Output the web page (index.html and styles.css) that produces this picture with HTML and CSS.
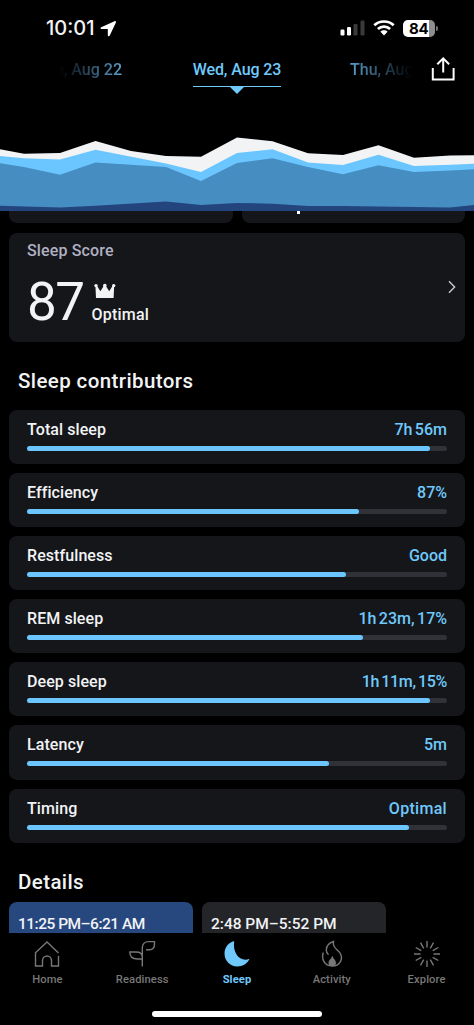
FILE: index.html
```html
<!DOCTYPE html>
<html lang="en">
<head>
    <meta charset="UTF-8">
    <meta name="viewport" content="width=device-width, initial-scale=1.0">
    <title>Sleep</title>
    <link rel="stylesheet" href="styles.css">
</head>
<body>
    <div class="screen">
        <header class="header">
            <div class="status-bar">
                <div class="status-left">
                    <span class="time">10:01</span>
                    <svg class="location" width="17" height="17" viewBox="0 0 17 17"><path d="M14.500 1.200 L1.200 7.200 C0 7.800 .4 9 1.600 9 H7.800 V15 C7.800 16.500 9.300 16.600 9.900 15.300 L15.900 2.500 C16.300 1.500 15.500 .7 14.500 1.200Z" fill="#fff"/></svg>
                </div>
                <div class="status-right">
                    <svg width="25" height="16" viewBox="0 0 25 16">
                        <rect x="0.5" y="9.5" width="4" height="6" rx="1.2" fill="#fff"/>
                        <rect x="7" y="7" width="4" height="8.500" rx="1.2" fill="#fff"/>
                        <rect x="13.500" y="4" width="4" height="11.500" rx="1.2" fill="#3a3a3b"/>
                        <rect x="20.500" y="0.500" width="4" height="15" rx="1.2" fill="#3a3a3b"/>
                    </svg>
                    <svg class="wifi" width="22" height="16" viewBox="0 0 22 16" fill="none" stroke="#fff" stroke-width="2.7">
                        <path d="M1.300 5.300 C6.600 .2 15.400 .2 20.700 5.300"/>
                        <path d="M4.900 9 C8.300 5.800 13.700 5.800 17.100 9"/>
                        <path d="M7.400 11.700 C9.400 9.900 12.600 9.900 14.600 11.700 L11 15.400Z" fill="#fff" stroke="none"/>
                    </svg>
                    <div class="battery"><span>84</span></div>
                </div>
            </div>
            <nav class="days">
                <span class="day day-prev">e, Aug 22</span>
                <span class="day day-current">Wed, Aug 23</span>
                <span class="day day-next">Thu, Aug</span>
                <svg class="share" width="24" height="25" viewBox="0 0 24 25" fill="none" stroke="#fff" stroke-width="2">
                    <path d="M1.800 12 V23.500 H22.600 V12 M12.200 16.500 V2.800 M6.300 8.200 L12.200 2.300 L18.100 8.200"/>
                </svg>
            </nav>
            <svg class="chart" width="474" height="76" viewBox="0 135 474 76">
                <path fill="#f2f3f5" d="M0 149.300 L24 153.700 L60 153 L95.500 141 L131 151 L166 156 L201 156.700 L237 137.500 L272.500 141.300 L308 153.300 L343 155 L378.500 145.300 L414 157.700 L450 155.500 L474 155.300 V211 H0Z"/>
                <path fill="#6bc6ff" d="M0 156 L24 158.300 L60 159.600 L95.500 149.700 L166 163.500 L201 172 L237 153 L272.500 149.300 L308 162.400 L343 165 L378.500 154.800 L414 166 L450 164.800 L474 163.700 V211 H0Z"/>
                <path fill="#468dc2" d="M0 163.300 L24 167 L60 174.800 L95.500 162.500 L166 167 L201 181 L237 163 L272.500 158.300 L308 167 L343 174.200 L378.500 165.300 L414 172 L450 170.500 L474 169.200 V211 H0Z"/>
                <path fill="#23447c" d="M0 205.700 L60 207.400 L95.500 205.800 L166 201.500 L201 205 L237 203 L272.500 203.700 L308 206 L343 206 L450 207.400 L474 205 V211 H0Z"/>
            </svg>
        </header>

        <main class="content">
            <div class="card-pair">
                <div class="card-stub"></div>
                <div class="card-stub has-text"></div>
            </div>

            <section class="score-card">
                <div>
                    <h2 class="score-label">Sleep Score</h2>
                    <div class="score-row">
                        <span class="score">87</span>
                        <div class="score-status">
                            <svg width="22" height="16" viewBox="0 0 22 16" fill="#f2f3f5">
                                <path d="M2 15 L1.400 2.500 L2.800 2.500 L6.400 8.300 L10 2.500 H11.600 L15.200 8.300 L18.800 2.500 L20.200 2.500 L19.600 15Z"/>
                                <circle cx="2" cy="2.600" r="1.700"/><circle cx="10.800" cy="2.600" r="1.800"/><circle cx="19.700" cy="2.600" r="1.700"/>
                            </svg>
                            <span>Optimal</span>
                        </div>
                    </div>
                </div>
                <svg width="8" height="14" viewBox="0 0 8 14" fill="none" stroke="#c4c5ca" stroke-width="1.500"><path d="M1 1.300 L6.600 7 L1 12.700"/></svg>
            </section>

            <h2 class="section-title">Sleep contributors</h2>
            <ul class="contributors">
                <li class="contributor">
                    <div class="row"><span>Total sleep</span><span class="value">7h 56m</span></div>
                    <div class="bar"><div class="fill" style="width: 96%"></div></div>
                </li>
                <li class="contributor">
                    <div class="row"><span>Efficiency</span><span class="value">87%</span></div>
                    <div class="bar"><div class="fill" style="width: 79%"></div></div>
                </li>
                <li class="contributor">
                    <div class="row"><span>Restfulness</span><span class="value">Good</span></div>
                    <div class="bar"><div class="fill" style="width: 76%"></div></div>
                </li>
                <li class="contributor">
                    <div class="row"><span>REM sleep</span><span class="value">1h 23m, 17%</span></div>
                    <div class="bar"><div class="fill" style="width: 80%"></div></div>
                </li>
                <li class="contributor">
                    <div class="row"><span>Deep sleep</span><span class="value tight">1h 11m, 15%</span></div>
                    <div class="bar"><div class="fill" style="width: 96%"></div></div>
                </li>
                <li class="contributor">
                    <div class="row"><span>Latency</span><span class="value">5m</span></div>
                    <div class="bar"><div class="fill" style="width: 72%"></div></div>
                </li>
                <li class="contributor">
                    <div class="row"><span>Timing</span><span class="value word">Optimal</span></div>
                    <div class="bar"><div class="fill" style="width: 91%"></div></div>
                </li>
            </ul>

            <h2 class="section-title">Details</h2>
            <div class="periods">
                <div class="period active">11:25 PM–6:21 AM</div>
                <div class="period">2:48 PM–5:52 PM</div>
            </div>
        </main>

        <footer class="tab-bar">
            <nav class="tabs">
                <a class="tab">
                    <svg width="28" height="28" viewBox="0 0 28 28"><path d="M25.500 13 L14 2 L2.500 12.800 V26 H9.500 V20.500 A4.500 4.500 0 0 1 18.500 20.500 V26 H25.500 V16"/></svg>
                    <span>Home</span>
                </a>
                <a class="tab">
                    <svg width="28" height="28" viewBox="0 0 28 28"><path d="M14.300 26.500 V8 C14.300 4 17 1.600 20.500 1.600 H26.500 V4 C26.500 8 24.300 9.700 21.500 9.700 H18 M14.300 19 H9.500 C4.500 19 1.800 17 1.800 12 H8 C11.500 12 14.300 13.500 14.300 17"/></svg>
                    <span>Readiness</span>
                </a>
                <a class="tab active">
                    <svg width="28" height="28" viewBox="0 0 28 28"><path class="solid" d="M11.200 1 C5.500 2.500 1.500 7.500 1.500 13.600 C1.500 21 7.200 26.500 14.200 26.500 C19.800 26.500 24.500 23.600 26.500 18.800 C18 22.500 9.300 14.500 11.200 1Z"/></svg>
                    <span>Sleep</span>
                </a>
                <a class="tab">
                    <svg width="28" height="28" viewBox="0 0 28 28">
                        <path d="M5.300 12.500 C3 19 6.500 26 14 26 C22 26 25.300 19 22.300 13.500 C20 9.500 14 8 15.500 1.500 C11 3 8.300 6 8.300 10 C8.300 12 9 13.500 10.500 14.800"/>
                        <path class="solid" d="M14.200 15.500 C14 18.500 10.500 20 10.500 23 C10.500 25 12 26.200 14.200 26.200 C16.500 26.200 18 25 18 23 C18 20 15 18.500 14.200 15.500Z"/>
                    </svg>
                    <span>Activity</span>
                </a>
                <a class="tab">
                    <svg width="28" height="28" viewBox="0 0 28 28"><path d="M14 1 V7.500 M14 20.500 V27 M1 14 H7.500 M20.500 14 H27 M7.500 2.700 L10.700 8.300 M17.300 19.700 L20.500 25.300 M2.700 7.500 L8.300 10.700 M19.700 17.300 L25.300 20.500 M2.700 20.500 L8.300 17.300 M19.700 10.700 L25.300 7.500 M7.500 25.300 L10.700 19.700 M17.300 8.300 L20.500 2.700"/></svg>
                    <span>Explore</span>
                </a>
            </nav>
            <div class="home-indicator"></div>
        </footer>
    </div>
</body>
</html>
```
FILE: styles.css
```css
:root {
    --accent: #6fc9fb;
    --card-bg: #15161a;
    --text-color: #f2f3f5;
    --muted: #777;
}

* {
    margin: 0;
    padding: 0;
    box-sizing: border-box;
}

body {
    background-color: #000;
    color: var(--text-color);
    font-family: Roboto, 'Liberation Sans', sans-serif;
    font-weight: 500;
}

svg {
    display: block;
    flex-shrink: 0;
}

.screen {
    width: 474px;
    height: 1025px;
    display: flex;
    flex-direction: column;
    overflow: hidden;
}

/* header */
.header {
    height: 211px;
    flex-shrink: 0;
    display: flex;
    flex-direction: column;
}

.status-bar {
    height: 56px;
    padding: 0 36px 0 46px;
    display: flex;
    justify-content: space-between;
    align-items: center;
    font-family: Inter, 'Liberation Sans', sans-serif;
    font-weight: 600;
}

.status-left,
.status-right {
    display: flex;
    align-items: center;
}

.time {
    font-size: 20px;
    font-weight: 500;
}

.location {
    margin-left: 5px;
}

.wifi {
    margin: 0 8px;
}

.battery {
    position: relative;
    width: 32px;
    height: 17px;
    margin-right: 3px;
    border-radius: 5px;
    background: linear-gradient(to right, #fff 26px, #8e8e8e 26px);
    color: #000;
    font-size: 15px;
    font-weight: 700;
    line-height: 17px;
    letter-spacing: -0.3px;
    padding-left: 6px;
}

.battery::after {
    content: '';
    position: absolute;
    right: -3px;
    top: 6px;
    width: 2px;
    height: 5px;
    border-radius: 0 2px 2px 0;
    background-color: #777;
}

.days {
    height: 44px;
    padding: 0 19px 0 54px;
    display: grid;
    grid-template-columns: 68px 230px 1fr 24px;
    align-items: start;
    font-size: 16px;
    line-height: 28px;
    white-space: nowrap;
}

.day {
    color: #5a9dca;
}

.day-prev {
    justify-self: end;
    -webkit-mask-image: linear-gradient(to right, transparent 4px, #000 66px);
    mask-image: linear-gradient(to right, transparent 4px, #000 66px);
}

.day-next {
    justify-self: start;
    margin-left: -2px;
    -webkit-mask-image: linear-gradient(to right, #000 0, transparent 62px);
    mask-image: linear-gradient(to right, #000 0, transparent 62px);
}

.day-current {
    position: relative;
    justify-self: center;
    height: 31px;
    letter-spacing: -0.1px;
    color: var(--accent);
    border-bottom: 1px solid var(--accent);
}

.day-current::after {
    content: '';
    position: absolute;
    left: 50%;
    top: 31px;
    margin-left: -7px;
    border: 7px solid transparent;
    border-top-color: var(--accent);
    border-bottom: 0;
}

.chart {
    margin-top: auto;
}

/* scrolling content */
.content {
    flex: 1;
    min-height: 0;
    overflow: hidden;
    padding: 0 9px;
}

.card-pair {
    display: grid;
    grid-template-columns: 1fr 1fr;
    gap: 9px;
}

.card-stub {
    position: relative;
    height: 12px;
    border-radius: 0 0 8px 8px;
    background-color: var(--card-bg);
}

.has-text::before {
    content: '';
    position: absolute;
    left: 55px;
    top: 0;
    width: 3px;
    height: 3px;
    background-color: #fff;
}

.score-card {
    height: 109px;
    margin-top: 10px;
    padding: 9px 9px 0 18px;
    border-radius: 8px;
    background-color: var(--card-bg);
    display: flex;
    justify-content: space-between;
}

.score-card > svg {
    margin-top: 38px;
}

.score-label {
    font-size: 16px;
    font-weight: 500;
    line-height: 18px;
    letter-spacing: 0.15px;
    color: #b0b0c2;
}

.score-row {
    display: flex;
    margin-top: 13px;
}

.score {
    font-size: 53px;
    font-weight: 400;
    line-height: 58px;
    letter-spacing: -1.5px;
}

.score-status {
    margin-left: 8px;
    padding-top: 10px;
    font-size: 16px;
    line-height: 18px;
    letter-spacing: 0.2px;
}

.score-status svg {
    margin: 0 0 7px 2px;
}

.section-title {
    margin: 26px 0 0 9px;
    font-size: 20.5px;
    font-weight: 500;
    line-height: 26px;
    letter-spacing: 0.4px;
}

.contributors {
    list-style: none;
    margin-top: 16px;
    display: grid;
    gap: 9px;
}

.contributor {
    height: 54.1px;
    padding: 10px 18px 0;
    border-radius: 8px;
    background-color: var(--card-bg);
}

.row {
    display: flex;
    justify-content: space-between;
    font-size: 16px;
    line-height: 19px;
    letter-spacing: 0.08px;
}

.value {
    color: var(--accent);
    letter-spacing: 0;
    word-spacing: -1.5px;
}

.value.tight {
    letter-spacing: -0.3px;
}

.value.word {
    letter-spacing: 0.3px;
}

.bar {
    height: 5px;
    margin-top: 7px;
    border-radius: 2.5px;
    background-color: #303238;
}

.fill {
    height: 100%;
    border-radius: 2.5px;
    background-color: #6bc6ff;
}

.periods {
    display: flex;
    gap: 9px;
    margin-top: 7px;
}

.period {
    width: 184px;
    height: 60px;
    padding: 12px 9px;
    border-radius: 8px;
    background-color: #242529;
    font-size: 15.5px;
    line-height: 20px;
    white-space: nowrap;
}

.period.active {
    background-color: #27477f;
    letter-spacing: -0.5px;
}

/* bottom tabs */
.tab-bar {
    height: 92px;
    flex-shrink: 0;
}

.tabs {
    display: grid;
    grid-template-columns: repeat(5, 1fr);
    padding-top: 7px;
}

.tab {
    display: flex;
    flex-direction: column;
    align-items: center;
    color: var(--muted);
    font-size: 11.2px;
    line-height: 14px;
    letter-spacing: 0.1px;
}

.tab svg {
    margin-bottom: 5px;
    fill: none;
    stroke: currentColor;
    stroke-width: 1.4;
}

.tab .solid {
    fill: currentColor;
    stroke: none;
}

.tab.active {
    color: var(--accent);
    font-weight: 700;
}

.home-indicator {
    width: 170px;
    height: 6px;
    margin: 24px auto 0;
    border-radius: 3px;
    background-color: #fff;
}
```
